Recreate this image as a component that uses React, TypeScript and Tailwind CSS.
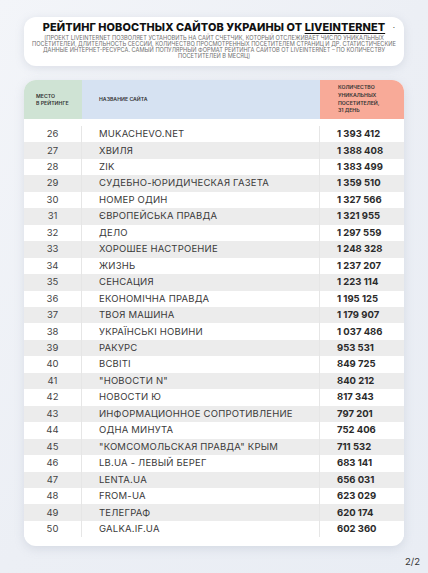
import React from "react";

const rows: [number, string, string][] = [
  [26, "MUKACHEVO.NET", "1 393 412"],
  [27, "ХВИЛЯ", "1 388 408"],
  [28, "ZIK", "1 383 499"],
  [29, "СУДЕБНО-ЮРИДИЧЕСКАЯ ГАЗЕТА", "1 359 510"],
  [30, "НОМЕР ОДИН", "1 327 566"],
  [31, "ЄВРОПЕЙСЬКА ПРАВДА", "1 321 955"],
  [32, "ДЕЛО", "1 297 559"],
  [33, "ХОРОШЕЕ НАСТРОЕНИЕ", "1 248 328"],
  [34, "ЖИЗНЬ", "1 237 207"],
  [35, "СЕНСАЦИЯ", "1 223 114"],
  [36, "ЕКОНОМІЧНА ПРАВДА", "1 195 125"],
  [37, "ТВОЯ МАШИНА", "1 179 907"],
  [38, "УКРАЇНСЬКІ НОВИНИ", "1 037 486"],
  [39, "РАКУРС", "953 531"],
  [40, "ВСВІТІ", "849 725"],
  [41, "\"НОВОСТИ N\"", "840 212"],
  [42, "НОВОСТИ Ю", "817 343"],
  [43, "ИНФОРМАЦИОННОЕ СОПРОТИВЛЕНИЕ", "797 201"],
  [44, "ОДНА МИНУТА", "752 406"],
  [45, "\"КОМСОМОЛЬСКАЯ ПРАВДА\" КРЫМ", "711 532"],
  [46, "LB.UA - ЛЕВЫЙ БЕРЕГ", "683 141"],
  [47, "LENTA.UA", "656 031"],
  [48, "FROM-UA", "623 029"],
  [49, "ТЕЛЕГРАФ", "620 174"],
  [50, "GALKA.IF.UA", "602 360"],
];

export default function App() {
  return (
    <div
      className="w-[428px] h-[573px] overflow-hidden bg-gradient-to-br from-[#f3f5f9] via-[#eceff5] to-[#e9edf4] flex flex-col px-[24px] pt-[17px]"
      style={{ fontFamily: "Inter, 'Noto Sans', sans-serif" }}
    >
      {/* Title card */}
      <div className="relative h-[49px] bg-white rounded-[12px] shadow-[0_2px_8px_rgba(150,160,180,0.25)] flex flex-col items-center pt-[4px]">
        <div className="text-[10.9px] leading-[13px] font-extrabold text-[#111] tracking-[0.1px] whitespace-nowrap">
          РЕЙТИНГ НОВОСТНЫХ САЙТОВ УКРАИНЫ ОТ{" "}
          <span className="underline underline-offset-[1.5px] decoration-[1px]">LIVEINTERNET</span>
        </div>
        <span className="absolute right-[9px] top-[6px] text-[8px] leading-[8px] text-[#333]">·</span>
        <div className="text-[5.65px] leading-[6px] text-[#707070] text-center mt-[1px] whitespace-nowrap">
          [ПРОЕКТ LIVEINTERNET ПОЗВОЛЯЕТ УСТАНОВИТЬ НА САЙТ СЧЕТЧИК, КОТОРЫЙ ОТСЛЕЖИВАЕТ ЧИСЛО УНИКАЛЬНЫХ
          <br />
          ПОСЕТИТЕЛЕЙ, ДЛИТЕЛЬНОСТЬ СЕССИЙ, КОЛИЧЕСТВО ПРОСМОТРЕННЫХ ПОСЕТИТЕЛЕМ СТРАНИЦ И ДР. СТАТИСТИЧЕСКИЕ
          <br />
          ДАННЫЕ ИНТЕРНЕТ-РЕСУРСА. САМЫЙ ПОПУЛЯРНЫЙ ФОРМАТ РЕЙТИНГА САЙТОВ ОТ LIVEINTERNET – ПО КОЛИЧЕСТВУ
          <br />
          ПОСЕТИТЕЛЕЙ В МЕСЯЦ]
        </div>
      </div>

      {/* Table card */}
      <div className="mt-[14px] h-[466px] bg-white rounded-[12px] shadow-[0_3px_10px_rgba(150,160,180,0.25)] overflow-hidden flex flex-col">
        <div className="h-[39px] flex shrink-0">
          <div className="w-[58px] bg-[#cfe3d4] flex items-center pl-[12px] text-[5.2px] leading-[7px] font-semibold text-[#333]">
            МЕСТО
            <br />
            В РЕЙТИНГЕ
          </div>
          <div className="w-[238px] bg-[#d6e2f2] flex items-center pl-[17px] text-[5.2px] font-semibold text-[#333]">
            НАЗВАНИЕ САЙТА
          </div>
          <div className="flex-1 bg-[#f8aa98] flex items-center pl-[18px] text-[5.2px] leading-[7.7px] font-semibold text-[#333]">
            <div>
              КОЛИЧЕСТВО
              <br />
              УНИКАЛЬНЫХ
              <br />
              ПОСЕТИТЕЛЕЙ,
              <br />
              31 ДЕНЬ
            </div>
          </div>
        </div>
        <div className="flex flex-col pt-[7px]">
          {rows.map(([n, name, val], i) => (
            <div
              key={n}
              className={`h-[16.46px] flex items-center ${i % 2 === 1 ? "bg-[#ececec]" : "bg-white"}`}
            >
              <div className="w-[58px] h-full flex items-center justify-center border-r border-[#e6e6e6] text-[9.5px] text-[#444]">
                {n}
              </div>
              <div className="w-[238px] h-full flex items-center pl-[17px] border-r border-[#e6e6e6] text-[9.5px] text-[#3a3a3a] tracking-[0.2px] whitespace-nowrap">
                {name}
              </div>
              <div className="flex-1 h-full flex items-center pl-[17px] text-[9.5px] font-bold text-[#2a2a2a]">
                {val}
              </div>
            </div>
          ))}
        </div>
      </div>

      <div className="flex justify-end mt-[9px] -mr-[16px] text-[9.5px] text-[#333]">2/2</div>
    </div>
  );
}
